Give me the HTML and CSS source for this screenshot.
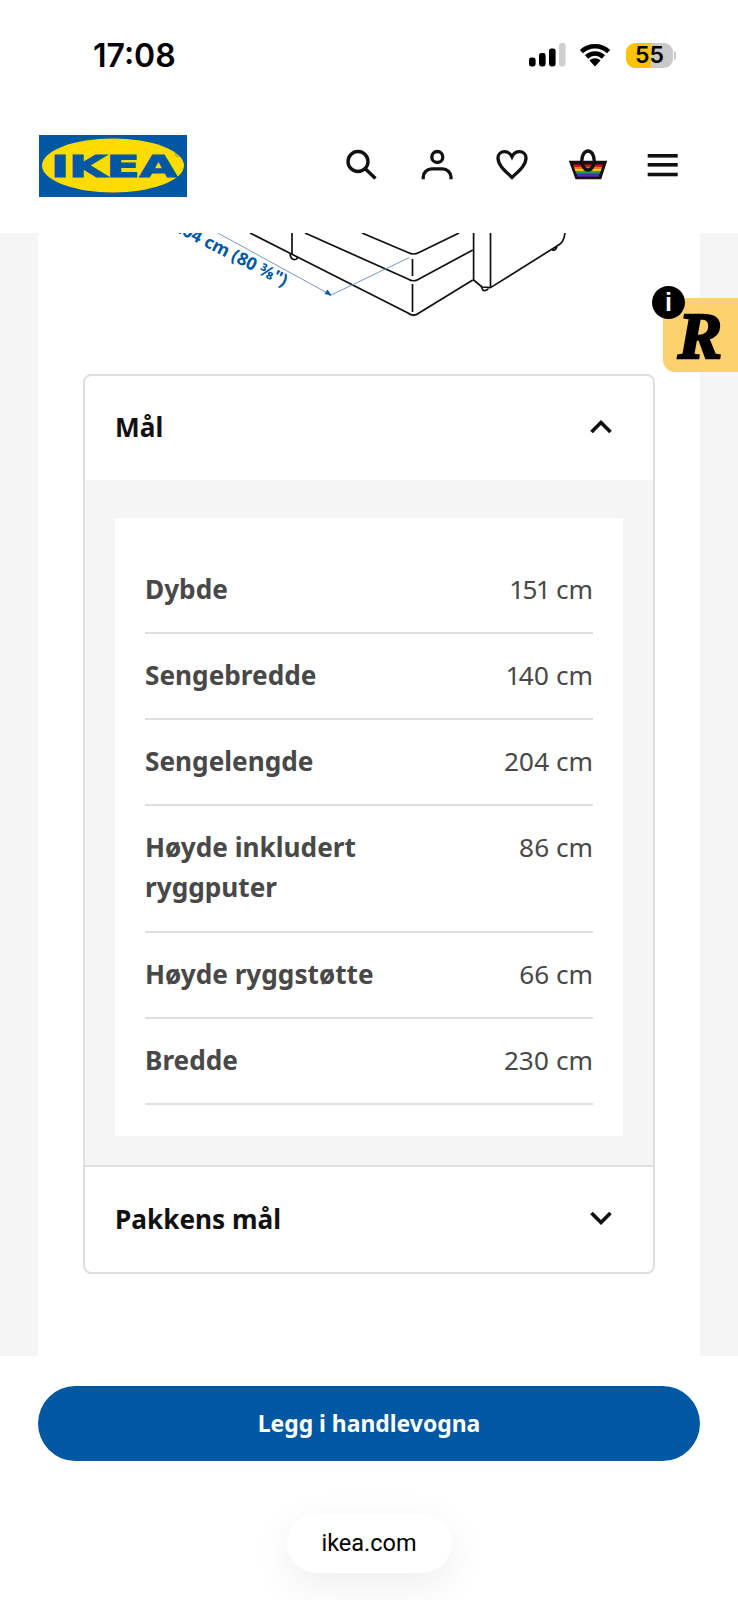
FILE: index.html
```html
<!DOCTYPE html>
<html lang="nb">
<head>
    <meta charset="UTF-8">
    <meta name="viewport" content="width=device-width, initial-scale=1.0">
    <title>IKEA</title>
    <link rel="stylesheet" href="styles.css">
</head>
<body>
    <div class="status-bar">
        <span class="clock">17:08</span>
        <div class="status-icons">
            <svg class="signal" width="37" height="24" viewBox="0 0 37 24">
                <rect x="0" y="14.5" width="6.6" height="9" rx="2.4" fill="#000"/>
                <rect x="10" y="10" width="6.6" height="13.5" rx="2.4" fill="#000"/>
                <rect x="20" y="5.5" width="6.6" height="18" rx="2.4" fill="#000"/>
                <rect x="30" y="0" width="6.6" height="23.5" rx="2.4" fill="#cfcfcf"/>
            </svg>
            <svg class="wifi" width="32" height="24" viewBox="0 0 32 24" fill="none" stroke="#000" stroke-width="4.6">
                <path d="M2.4 8.6 A20 20 0 0 1 29.6 8.6"/>
                <path d="M7.6 14 A12 12 0 0 1 24.4 14"/>
                <path d="M16 23.6 L10.4 17.6 A8 8 0 0 1 21.6 17.6 Z" fill="#000" stroke="none"/>
            </svg>
            <div class="battery">
                <div class="battery-body">55</div>
                <div class="battery-tip"></div>
            </div>
        </div>
    </div>

    <header class="site-header">
        <svg class="logo" width="148" height="62" viewBox="0 0 148 62" role="img" aria-label="IKEA">
            <rect width="148" height="62" fill="#0058a3"/>
            <ellipse cx="74" cy="30.5" rx="71" ry="27" fill="#ffdb00"/>
            <text class="logo-text" x="75" y="41.5" text-anchor="middle" textLength="126" lengthAdjust="spacingAndGlyphs">IKEA</text>
            <text class="logo-mark" x="135.5" y="22">®</text>
        </svg>
        <nav class="header-icons">
            <svg width="40" height="40" viewBox="0 0 40 40" fill="none" stroke="#111" stroke-width="3.4">
                <circle cx="17" cy="16.5" r="10"/>
                <path d="M24 23.5 L34.5 33.5"/>
            </svg>
            <svg width="40" height="40" viewBox="0 0 40 40" fill="none" stroke="#111" stroke-width="3.3">
                <circle cx="20.3" cy="12" r="5.5"/>
                <path d="M6.2 34.3 V32 A8.5 8.5 0 0 1 14.7 23.9 H25.5 A8.5 8.5 0 0 1 34 32 V34.3"/>
            </svg>
            <svg width="40" height="40" viewBox="0 0 40 40" fill="none" stroke="#111" stroke-width="3.3">
                <path d="M20 32.5 C14 26.5 6 20.5 6 13 C6 9 9 6.7 12.5 6.7 C16 6.7 18.5 8.7 20 11.7 C21.5 8.7 24 6.7 27.5 6.7 C31 6.7 34 9 34 13 C34 20.5 26 26.5 20 32.5 Z"/>
            </svg>
            <svg width="40" height="40" viewBox="0 0 40 40">
                <path d="M0.8 15.7 H39.2 L33.2 34.3 H7.5 Z" fill="#111"/>
                <rect x="5.6" y="19.5" width="28.8" height="2.2" fill="#e4002b"/>
                <rect x="6.3" y="21.7" width="27.4" height="2.2" fill="#ff7a00"/>
                <rect x="7" y="23.9" width="26" height="2" fill="#ffdd00"/>
                <rect x="7.7" y="25.9" width="24.6" height="2" fill="#2fa84f"/>
                <rect x="8.4" y="27.9" width="23.2" height="1.7" fill="#1f5fd6"/>
                <rect x="9" y="29.6" width="22" height="2" fill="#7a12d8"/>
                <ellipse cx="20" cy="15.5" rx="6.2" ry="9.5" fill="none" stroke="#111" stroke-width="3.4"/>
            </svg>
            <svg width="40" height="40" viewBox="0 0 40 40" fill="#111">
                <rect x="4.7" y="9" width="30" height="3.6"/>
                <rect x="4.7" y="18" width="30" height="3.6"/>
                <rect x="4.7" y="27.7" width="30" height="3.6"/>
            </svg>
        </nav>
    </header>

    <main class="page">
        <div class="panel">
            <svg class="drawing" width="662" height="141" viewBox="38 233 662 141" fill="none" stroke="#111" stroke-width="1.7" stroke-linejoin="round">
                <path d="M250 233 L408 313 Q413.5 317.5 419 313 L472.8 280"/>
                <path d="M305 233 L408 279 Q413.5 282.5 419 279 L472.8 250"/>
                <path d="M362 233 L408 252.5 Q413.5 255.5 419 252.5 L459 233"/>
                <path d="M412.5 259 V276 M412.5 284 V312"/>
                <path d="M292 233 V254"/>
                <path d="M290 254 Q291 260 295 259.5 Q298 259 297 256.5"/>
                <path d="M473.6 233 V280 L482 287 L490.5 287.6 L557 246 Q564 243 565 233"/>
                <path d="M490.5 233 V287.6"/>
                <path d="M481.5 286 Q482 291 485 290.5 Q488 290 488 288.5"/>
                <path d="M552 250 Q555 251 557 247"/>
                <g stroke="#7a97c2" stroke-width="1">
                    <path d="M217.8 233 L331 295"/>
                    <path d="M329 296 L409 257.7"/>
                </g>
                <path d="M331.5 295.5 L324.5 294 L327.5 289.5 Z" fill="#0058a3" stroke="none"/>
                <text class="drawing-label" transform="translate(172 230) rotate(27)">204 cm (80 ⅜")</text>
            </svg>

            <section class="accordion">
                <div class="accordion-head">
                    <h2>Mål</h2>
                    <svg width="22" height="13" viewBox="0 0 22 13" fill="none" stroke="#111" stroke-width="3.6">
                        <path d="M1.5 12 L11 2.5 L20.5 12"/>
                    </svg>
                </div>
                <div class="accordion-body">
                    <dl class="specs">
                        <div class="spec-row"><dt>Dybde</dt><dd>151 cm</dd></div>
                        <div class="spec-row"><dt>Sengebredde</dt><dd>140 cm</dd></div>
                        <div class="spec-row"><dt>Sengelengde</dt><dd>204 cm</dd></div>
                        <div class="spec-row"><dt>Høyde inkludert ryggputer</dt><dd>86 cm</dd></div>
                        <div class="spec-row"><dt>Høyde ryggstøtte</dt><dd>66 cm</dd></div>
                        <div class="spec-row"><dt>Bredde</dt><dd>230 cm</dd></div>
                    </dl>
                </div>
                <div class="accordion-head closed">
                    <h2>Pakkens mål</h2>
                    <svg width="22" height="13" viewBox="0 0 22 13" fill="none" stroke="#111" stroke-width="3.6">
                        <path d="M1.5 1 L11 10.5 L20.5 1"/>
                    </svg>
                </div>
            </section>
        </div>
    </main>

    <footer class="buy-bar">
        <button class="buy-button">Legg i handlevogna</button>
        <div class="url-pill">ikea.com</div>
    </footer>

    <aside class="rabbit-badge">
        <span class="badge-info">i</span>
        <span class="badge-letter">R</span>
    </aside>
</body>
</html>
```

FILE: styles.css
```css
* {
    margin: 0;
    padding: 0;
    box-sizing: border-box;
}

body {
    position: relative;
    display: flex;
    flex-direction: column;
    width: 738px;
    height: 1600px;
    overflow: hidden;
    background: #fff;
    font-family: 'Noto Sans', sans-serif;
}

.status-bar {
    display: flex;
    justify-content: space-between;
    align-items: center;
    height: 110px;
    padding: 0 62px 0 93px;
}

.clock {
    font-family: Inter, sans-serif;
    font-size: 32px;
    font-weight: 600;
    color: #000;
}

.status-icons {
    display: flex;
    align-items: center;
    gap: 15px;
}

.signal {
    margin-right: -2px;
}

.battery {
    display: flex;
    align-items: center;
    gap: 1px;
}

.battery-body {
    width: 47px;
    height: 25px;
    border-radius: 9px;
    background: linear-gradient(90deg, #fcc400 54%, #c9c9c9 54%);
    font-family: Inter, sans-serif;
    font-size: 23px;
    font-weight: 600;
    line-height: 25px;
    text-align: center;
    color: #000;
}

.battery-tip {
    width: 2px;
    height: 9px;
    border-radius: 0 2px 2px 0;
    background: #c9c9c9;
}

.site-header {
    display: flex;
    justify-content: space-between;
    align-items: center;
    height: 123px;
    padding: 0 55px 12px 39px;
}

.header-icons {
    display: flex;
    gap: 35.5px;
    margin-bottom: 1px;
}

.logo-text {
    font-family: 'DejaVu Sans', sans-serif;
    font-size: 30px;
    font-weight: 700;
    fill: #0058a3;
    stroke: #0058a3;
    stroke-width: 1.2px;
}

.logo-mark {
    font-family: 'Liberation Sans', sans-serif;
    font-size: 9px;
    fill: #0058a3;
}

.page {
    flex: 1;
    padding: 0 38px;
    background: #f5f5f5;
}

.panel {
    height: 100%;
    background: #fff;
}

.drawing {
    display: block;
}

.drawing-label {
    font-family: 'Noto Sans', sans-serif;
    font-size: 17.5px;
    font-weight: 700;
    fill: #0058a3;
    stroke: none;
}

.accordion {
    margin: 0 45px;
    border: 2px solid #dfdfdf;
    border-radius: 8px;
    overflow: hidden;
}

.accordion-head {
    display: flex;
    justify-content: space-between;
    align-items: center;
    height: 104px;
    padding: 0 41px 3px 30px;
}

.accordion-head.closed {
    height: 107px;
    padding-bottom: 2px;
    border-top: 2px solid #dfdfdf;
}

.accordion-head h2 {
    font-size: 26.2px;
    font-weight: 700;
    color: #111;
}

.accordion-body {
    padding: 38px 30px 29px;
    background: #f5f5f5;
}

.specs {
    padding: 29.5px 30px 31px;
    background: #fff;
}

.spec-row {
    display: flex;
    justify-content: space-between;
    gap: 40px;
    padding: 21.15px 0 23.15px;
    border-bottom: 2px solid #dfdfdf;
    font-size: 26.2px;
    line-height: 40px;
    color: #484848;
}

.spec-row dt {
    max-width: 270px;
    font-weight: 700;
}

.spec-row dd {
    white-space: nowrap;
    font-variant-numeric: proportional-nums;
}

.buy-bar {
    display: flex;
    flex-direction: column;
    align-items: center;
    height: 244px;
    padding-top: 30px;
    background: #fff;
}

.buy-button {
    width: 662px;
    height: 75px;
    border: none;
    border-radius: 38px;
    background: #0058a3;
    font-family: 'Noto Sans', sans-serif;
    font-size: 22.9px;
    font-weight: 700;
    color: #fff;
}

.url-pill {
    width: 165px;
    height: 60px;
    margin-top: 52px;
    border-radius: 30px;
    background: #fff;
    box-shadow: 0 12px 40px rgba(0, 0, 0, 0.07);
    font-family: Roboto, sans-serif;
    font-size: 23.5px;
    line-height: 60px;
    text-align: center;
    color: #000;
}

/* browser extension tab on the right edge */
.rabbit-badge {
    position: absolute;
    top: 298px;
    left: 663px;
    width: 75px;
    height: 74px;
    border-radius: 12px 0 0 12px;
    background: #fdd26e;
}

.badge-info {
    position: absolute;
    top: -12px;
    left: -11px;
    width: 33px;
    height: 33px;
    border-radius: 50%;
    background: #000;
    font-family: 'Liberation Sans', sans-serif;
    font-size: 25px;
    font-weight: 700;
    line-height: 33px;
    text-align: center;
    color: #fff;
}

.badge-letter {
    position: absolute;
    top: 6px;
    left: 15px;
    font-family: 'Liberation Serif', serif;
    font-size: 66px;
    font-style: italic;
    font-weight: 700;
    line-height: 64px;
    color: #000;
    -webkit-text-stroke: 2.5px #000;
}
```
